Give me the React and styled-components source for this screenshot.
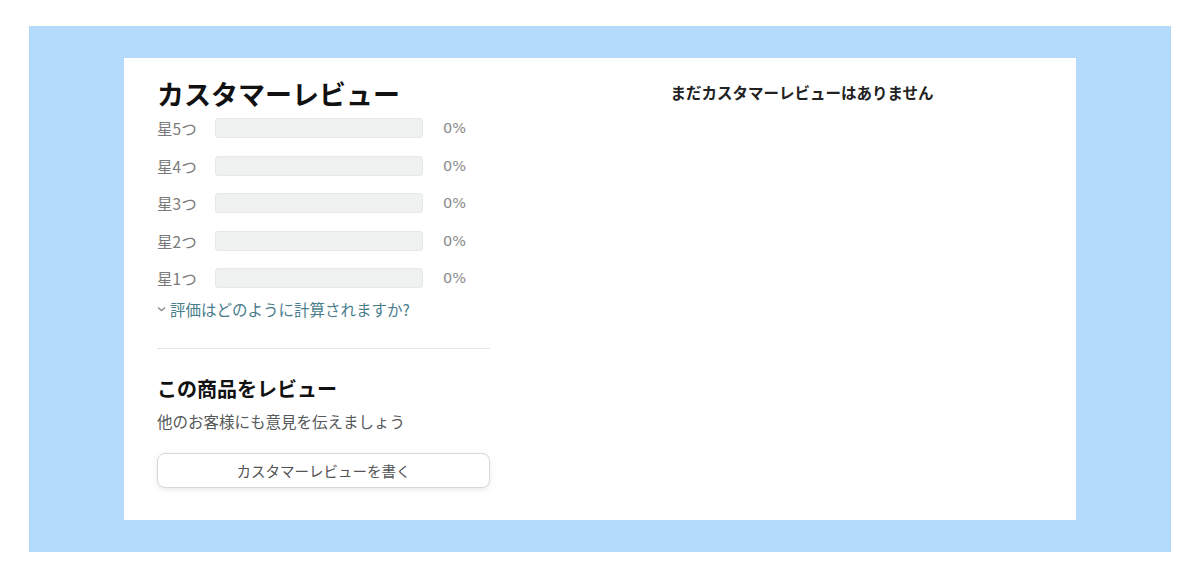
import React from 'react'
import styled, { createGlobalStyle } from 'styled-components'

const GlobalStyle = createGlobalStyle`
  body {
    margin: 0;
    background: #ffffff;
    font-family: "Noto Sans CJK JP", "Noto Sans", sans-serif;
    color: #0f1111;
  }
`

const Page = styled.div`
  padding: 26px 29px;
  width: 1200px;
  height: 578px;
  box-sizing: border-box;
`

const Backdrop = styled.div`
  background: #b3d9fb;
  padding: 32px 95px;
  height: 526px;
  box-sizing: border-box;
`

const Card = styled.div`
  background: #ffffff;
  height: 462px;
  box-sizing: border-box;
  padding: 20px 0 0 33px;
  display: grid;
  grid-template-columns: 333px 1fr;
  column-gap: 38px;
`

const LeftCol = styled.div`
  display: flex;
  flex-direction: column;
`

const Title = styled.h2`
  margin: 0;
  font-size: 27px;
  line-height: 31px;
  font-weight: 700;
  color: #111;
`

const Histogram = styled.div`
  display: flex;
  flex-direction: column;
  gap: 17.5px;
  margin-top: 9px;
`

const Row = styled.div`
  display: flex;
  align-items: center;
  height: 20px;
`

const StarLabel = styled.span`
  width: 58px;
  font-size: 15.5px;
  color: #7a7a7a;
`

const Bar = styled.div`
  width: 208px;
  height: 20px;
  background: #f0f2f2;
  border-radius: 4px;
  box-shadow: inset 0 0 0 1px #e6e8e8;
  overflow: hidden;
`

const Fill = styled.div`
  height: 100%;
  background: #de7921;
`

const Percent = styled.span`
  margin-left: 20px;
  font-family: "DejaVu Sans", "Noto Sans CJK JP", sans-serif;
  font-size: 14.5px;
  color: #8a8a8a;
`

const HowLink = styled.a`
  margin-top: 11px;
  display: flex;
  align-items: center;
  gap: 4px;
  font-size: 15.5px;
  line-height: 20px;
  color: #4a7d8c;
  text-decoration: none;
`

const Divider = styled.hr`
  border: none;
  border-top: 1px solid #e3e6e6;
  margin: 29px 0 0;
`

const SubTitle = styled.h3`
  margin: 28px 0 0;
  font-size: 20px;
  line-height: 24px;
  font-weight: 700;
  color: #111;
`

const Note = styled.p`
  margin: 10px 0 0;
  font-size: 15.5px;
  line-height: 20px;
  color: #565959;
`

const WriteButton = styled.button`
  margin-top: 22px;
  height: 35px;
  width: 100%;
  background: #ffffff;
  border: 1px solid #d5d9d9;
  border-radius: 8px;
  box-shadow: 0 2px 5px rgba(213, 217, 217, 0.5);
  font-family: inherit;
  font-size: 14.5px;
  color: #555;
  cursor: pointer;
`

const RightCol = styled.div`
  text-align: center;
`

const Empty = styled.p`
  margin: 4px 0 0;
  font-size: 15.5px;
  line-height: 20px;
  font-weight: 700;
  color: #222;
`

const Chevron = () => (
  <svg width="9" height="6" viewBox="0 0 9 6">
    <path d="M1 1.5 L4.5 4.5 L8 1.5" fill="none" stroke="#8a8a8a" strokeWidth="1.4" />
  </svg>
)

const rows = [5, 4, 3, 2, 1].map(n => ({ stars: n, pct: 0 }))

const App = () => (
  <Page>
    <GlobalStyle />
    <Backdrop>
      <Card>
        <LeftCol>
          <Title>カスタマーレビュー</Title>
          <Histogram>
            {rows.map(r => (
              <Row key={r.stars}>
                <StarLabel>星{r.stars}つ</StarLabel>
                <Bar>
                  <Fill style={{ width: `${r.pct}%` }} />
                </Bar>
                <Percent>{r.pct}%</Percent>
              </Row>
            ))}
          </Histogram>
          <HowLink href="#">
            <Chevron />
            評価はどのように計算されますか?
          </HowLink>
          <Divider />
          <SubTitle>この商品をレビュー</SubTitle>
          <Note>他のお客様にも意見を伝えましょう</Note>
          <WriteButton>カスタマーレビューを書く</WriteButton>
        </LeftCol>
        <RightCol>
          <Empty>まだカスタマーレビューはありません</Empty>
        </RightCol>
      </Card>
    </Backdrop>
  </Page>
)

export default App
